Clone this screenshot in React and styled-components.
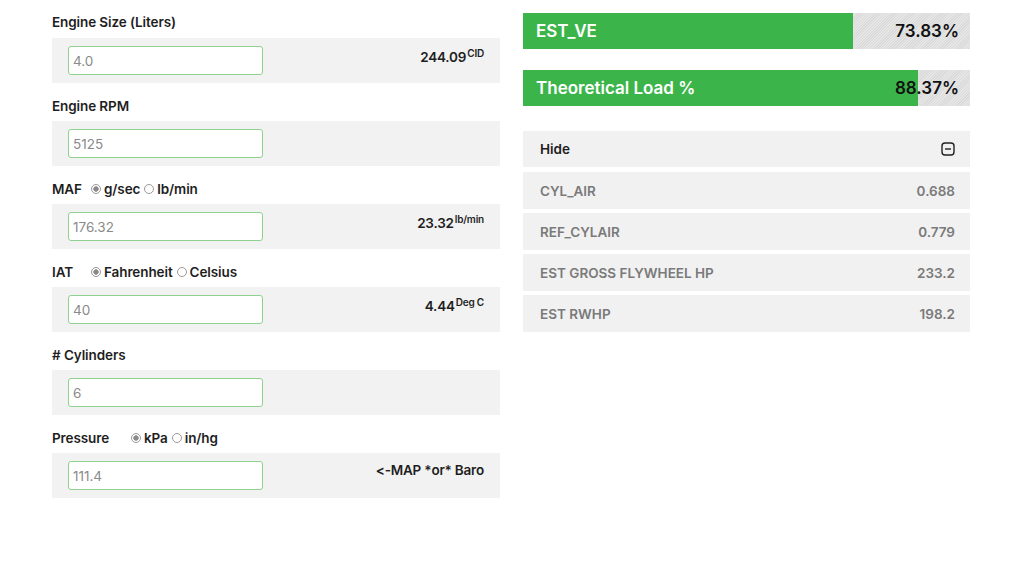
import React from "react";
import styled, { createGlobalStyle } from "styled-components";

const GlobalStyle = createGlobalStyle`
  body {
    margin: 0;
    background: #fff;
    font-family: "Inter", "Liberation Sans", sans-serif;
    color: #1e1e1e;
  }
`;

const Page = styled.div`
  display: grid;
  grid-template-columns: 448px 447px;
  column-gap: 23px;
  padding: 0 0 0 52px;
  width: 1024px;
  height: 566px;
  box-sizing: border-box;
  overflow: hidden;
`;

const Column = styled.div`
  display: flex;
  flex-direction: column;
`;

const Field = styled.div`
  display: flex;
  flex-direction: column;
`;

const LabelRow = styled.div`
  display: flex;
  align-items: center;
  height: 38px;
  padding-top: ${(p) => (p.first ? "6px" : "8px")};
  box-sizing: border-box;
  font-size: 13.5px;
  font-weight: 600;
  letter-spacing: -0.1px;
`;

const LabelText = styled.span`
  min-width: ${(p) => p.w || 0}px;
`;

const RadioGroup = styled.span`
  display: flex;
  align-items: center;
  gap: 3px;
  margin-left: 7px;
`;

const Radio = styled.span`
  width: 8px;
  height: 8px;
  border-radius: 50%;
  border: 1px solid #9a9a9a;
  background: ${(p) => (p.checked ? "radial-gradient(circle, #8a8a8a 0 2.4px, #fff 3px)" : "#fff")};
  display: inline-block;
  margin-left: ${(p) => (p.second ? "1px" : "0")};
`;

const Box = styled.div`
  display: flex;
  justify-content: space-between;
  align-items: flex-start;
  height: 45px;
  background: #f2f2f2;
  padding: 8px 16px 0 16px;
  box-sizing: border-box;
`;

const Input = styled.input`
  width: 195px;
  height: 29px;
  box-sizing: border-box;
  border: 1px solid #8fd18f;
  border-radius: 3px;
  background: #fff;
  padding: 0 4px;
  font-family: "Inter", "Liberation Sans", sans-serif;
  font-size: 13.5px;
  color: #8a8a8a;
  outline: none;
`;

const Result = styled.span`
  font-size: 13.5px;
  font-weight: 600;
  margin-top: 1px;
  letter-spacing: -0.2px;
  sup {
    font-size: 10px;
    vertical-align: 5px;
    margin-left: 1px;
  }
`;

const Bar = styled.div`
  position: relative;
  height: 36px;
  margin-top: ${(p) => p.top}px;
  background: repeating-linear-gradient(
    -45deg,
    #e6e6e6 0 1px,
    #dadada 1px 2px
  );
  display: flex;
  align-items: center;
  justify-content: space-between;
  padding: 0 11px 0 13px;
  box-sizing: border-box;
  font-size: 17px;
  font-weight: 600;
`;

const Fill = styled.div`
  position: absolute;
  left: 0;
  top: 0;
  bottom: 0;
  background: #3bb54a;
`;

const BarLabel = styled.span`
  position: relative;
  color: #fff;
`;

const BarValue = styled.span`
  position: relative;
  color: #111;
`;

const Table = styled.div`
  display: flex;
  flex-direction: column;
  gap: 4px;
  margin-top: 25px;
`;

const Row = styled.div`
  height: ${(p) => (p.head ? "36px" : "37px")};
  background: #f1f1f1;
  display: flex;
  align-items: center;
  justify-content: space-between;
  padding: 0 15px 0 17px;
  font-size: 13.5px;
  font-weight: 600;
  color: ${(p) => (p.head ? "#1e1e1e" : "#7a7a7a")};
  margin-bottom: ${(p) => (p.head ? "1px" : "0")};
`;

const MinusIcon = () => (
  <svg width="14" height="14" viewBox="0 0 14 14">
    <rect x="1" y="1" width="12" height="12" rx="3" fill="none" stroke="#222" strokeWidth="1.4" />
    <line x1="4" y1="7" x2="10" y2="7" stroke="#222" strokeWidth="1.4" />
  </svg>
);

const fields = [
  { label: "Engine Size (Liters)", value: "4.0", result: "244.09", unit: "CID" },
  { label: "Engine RPM", value: "5125" },
  { label: "MAF", w: 32, radios: ["g/sec", "lb/min"], value: "176.32", result: "23.32", unit: "lb/min" },
  { label: "IAT", w: 32, radios: ["Fahrenheit", "Celsius"], value: "40", result: "4.44", unit: "Deg C" },
  { label: "# Cylinders", value: "6" },
  { label: "Pressure", w: 72, radios: ["kPa", "in/hg"], value: "111.4", note: "<-MAP *or* Baro" },
];

const rows = [
  ["CYL_AIR", "0.688"],
  ["REF_CYLAIR", "0.779"],
  ["EST GROSS FLYWHEEL HP", "233.2"],
  ["EST RWHP", "198.2"],
];

export default function App() {
  return (
    <>
      <GlobalStyle />
      <Page>
        <Column>
          {fields.map((f, i) => (
            <Field key={f.label}>
              <LabelRow first={i === 0}>
                <LabelText w={f.w}>{f.label}</LabelText>
                {f.radios && (
                  <RadioGroup>
                    <Radio checked />
                    <span>{f.radios[0]}</span>
                    <Radio second />
                    <span>{f.radios[1]}</span>
                  </RadioGroup>
                )}
              </LabelRow>
              <Box>
                <Input defaultValue={f.value} />
                {f.result && (
                  <Result>
                    {f.result}
                    <sup>{f.unit}</sup>
                  </Result>
                )}
                {f.note && <Result>{f.note}</Result>}
              </Box>
            </Field>
          ))}
        </Column>
        <Column>
          <Bar top={13}>
            <Fill style={{ width: "73.83%" }} />
            <BarLabel>EST_VE</BarLabel>
            <BarValue>73.83%</BarValue>
          </Bar>
          <Bar top={21}>
            <Fill style={{ width: "88.37%" }} />
            <BarLabel>Theoretical Load %</BarLabel>
            <BarValue>88.37%</BarValue>
          </Bar>
          <Table>
            <Row head>
              <span>Hide</span>
              <MinusIcon />
            </Row>
            {rows.map(([k, v]) => (
              <Row key={k}>
                <span>{k}</span>
                <span>{v}</span>
              </Row>
            ))}
          </Table>
        </Column>
      </Page>
    </>
  );
}
